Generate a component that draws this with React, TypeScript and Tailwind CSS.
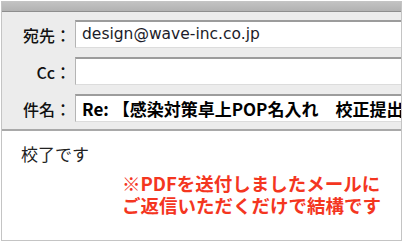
export default function App() {
  const cjk = { fontFamily: '"Noto Sans CJK JP", "Noto Sans", sans-serif' };
  const rows: { label: string; content: React.ReactNode }[] = [
    {
      label: "宛先：",
      content: (
        <span className="text-[15.5px] text-[#1c1c2a]" style={{ fontFamily: '"DejaVu Sans", sans-serif' }}>
          design@wave-inc.co.jp
        </span>
      ),
    },
    { label: "Cc：", content: null },
    {
      label: "件名：",
      content: (
        <span className="text-[17px] font-semibold text-black whitespace-nowrap" style={cjk}>
          Re: 【感染対策卓上POP名入れ　校正提出
        </span>
      ),
    },
  ];
  return (
    <div className="w-[403px] h-[242px] bg-white p-[1px]">
      <div className="h-full w-full border border-[#c4c4c4] flex flex-col overflow-hidden">
        <div className="h-[10px] shrink-0 bg-gradient-to-b from-[#c2c2c2] to-[#b2b2b2] border-b border-[#8e8e8e]" />
        <div className="h-[119px] shrink-0 bg-[#ececec] pt-[8px] flex flex-col gap-[9px] border-b-2 border-[#a9a9a9]">
          {rows.map((r) => (
            <div key={r.label} className="flex items-center h-[28px]">
              <div className="w-[69px] shrink-0 text-right text-[16px] font-medium text-[#111] leading-none pt-[2px]" style={cjk}>
                {r.label}
              </div>
              <div className="ml-[4px] flex-1 -mr-[8px] h-[28px] bg-white border-t-2 border-t-[#9c9c9c] border-l border-l-[#b4b4b4] border-b border-b-[#dcdcdc] flex items-center pl-[6px] overflow-hidden">
                {r.content}
              </div>
            </div>
          ))}
        </div>
        <div className="flex-1 bg-white pl-[19px] pt-[11px]" style={cjk}>
          <div className="text-[17px] leading-[24px] text-[#222]">校了です</div>
          <div className="ml-[101px] mt-[6px] text-[18.5px] leading-[22px] font-semibold text-[#f4361f] whitespace-nowrap">
            <div>※PDFを送付しましたメールに</div>
            <div>ご返信いただくだけで結構です</div>
          </div>
        </div>
      </div>
    </div>
  );
}
